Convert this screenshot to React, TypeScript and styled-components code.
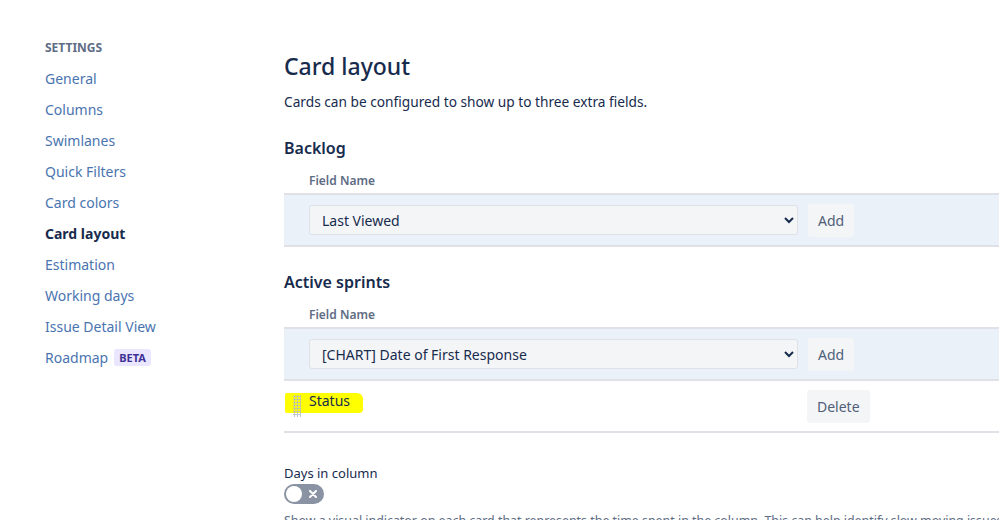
import React from "react";
import styled, { createGlobalStyle } from "styled-components";

const GlobalStyle = createGlobalStyle`
  body {
    margin: 0;
    background: #fff;
    font-family: "Noto Sans", "Liberation Sans", sans-serif;
    color: #172b4d;
  }
`;

const navItems = [
  "General",
  "Columns",
  "Swimlanes",
  "Quick Filters",
  "Card colors",
  "Card layout",
  "Estimation",
  "Working days",
  "Issue Detail View",
];

const App: React.FC = () => {
  return (
    <>
      <GlobalStyle />
      <Page>
        <Sidebar>
          <SideHeading>SETTINGS</SideHeading>
          {navItems.map((item) => (
            <NavLink key={item} $active={item === "Card layout"}>
              {item}
            </NavLink>
          ))}
          <NavLink>
            Roadmap <Lozenge>BETA</Lozenge>
          </NavLink>
        </Sidebar>

        <Main>
          <Title>Card layout</Title>
          <Intro>Cards can be configured to show up to three extra fields.</Intro>

          <SectionTitle>Backlog</SectionTitle>
          <FieldHead>Field Name</FieldHead>
          <AddRow>
            <Select defaultValue="Last Viewed">
              <option>Last Viewed</option>
            </Select>
            <Button>Add</Button>
          </AddRow>

          <SectionTitle $top={25}>Active sprints</SectionTitle>
          <FieldHead>Field Name</FieldHead>
          <AddRow>
            <Select defaultValue="[CHART] Date of First Response">
              <option>[CHART] Date of First Response</option>
            </Select>
            <Button>Add</Button>
          </AddRow>
          <FieldRow>
            <Marker />
            <Handle />
            <FieldName>Status</FieldName>
            <Button>Delete</Button>
          </FieldRow>

          <ToggleLabel>Days in column</ToggleLabel>
          <Toggle>
            <Knob />
            <Cross>
              <svg width="8" height="8" viewBox="0 0 8 8">
                <path d="M1 1L7 7M7 1L1 7" stroke="#fff" strokeWidth="2" strokeLinecap="round" />
              </svg>
            </Cross>
          </Toggle>
          <Help>
            Show a visual indicator on each card that represents the time spent in the column. This can help identify slow moving issues.
          </Help>
        </Main>
      </Page>
    </>
  );
};

const Page = styled.div`
  display: flex;
  width: 999px;
  height: 520px;
  overflow: hidden;
`;

const Sidebar = styled.nav`
  width: 284px;
  flex-shrink: 0;
  padding: 40px 0 0 45px;
  box-sizing: border-box;
  display: flex;
  flex-direction: column;
`;

const SideHeading = styled.div`
  font-size: 12px;
  font-weight: 700;
  line-height: 16px;
  color: #5e6c84;
  margin-bottom: 7px;
`;

const NavLink = styled.a<{ $active?: boolean }>`
  display: flex;
  align-items: center;
  height: 31px;
  font-size: 14px;
  color: ${(p) => (p.$active ? "#172b4d" : "#4a74b0")};
  font-weight: ${(p) => (p.$active ? 700 : 400)};
  cursor: pointer;
`;

const Lozenge = styled.span`
  margin-left: 6px;
  background: #eae6ff;
  color: #403294;
  font-size: 11px;
  font-weight: 700;
  padding: 1px 5px;
  border-radius: 3px;
  line-height: 15px;
`;

const Main = styled.main`
  flex: 1;
  min-width: 0;
  padding-top: 50px;
`;

const Title = styled.h1`
  margin: 0;
  font-size: 23px;
  font-weight: 500;
  line-height: 32px;
  color: #172b4d;
`;

const Intro = styled.p`
  margin: 10px 0 0;
  font-size: 13.7px;
  line-height: 20px;
  color: #172b4d;
`;

const SectionTitle = styled.h3<{ $top?: number }>`
  margin: ${(p) => p.$top ?? 26}px 0 0;
  font-size: 16px;
  font-weight: 600;
  line-height: 20px;
  color: #172b4d;
`;

const FieldHead = styled.div`
  margin-top: 15px;
  padding-left: 25px;
  font-size: 12px;
  font-weight: 600;
  line-height: 16px;
  color: #5e6c84;
  padding-bottom: 4px;
`;

const AddRow = styled.div`
  display: flex;
  align-items: center;
  gap: 10px;
  height: 50px;
  padding-left: 25px;
  background: #ebf1f9;
  border-top: 2px solid #dfe1e6;
  border-bottom: 2px solid #dfe1e6;
`;

const Select = styled.select`
  width: 489px;
  height: 30px;
  padding: 0 8px;
  font-family: inherit;
  font-size: 14px;
  color: #172b4d;
  background: #f4f5f7;
  border: 1px solid #dfe1e6;
  border-radius: 3px;
`;

const Button = styled.button`
  height: 33px;
  padding: 0 10px;
  font-family: inherit;
  font-size: 14px;
  color: #505f79;
  background: #f4f5f7;
  border: 0;
  border-radius: 3px;
`;

const FieldRow = styled.div`
  display: flex;
  align-items: center;
  height: 50px;
  padding-left: 9px;
  border-bottom: 2px solid #dfe1e6;
  position: relative;
  ${Button} {
    margin-left: 458px;
  }
`;

const Marker = styled.span`
  position: absolute;
  left: 1px;
  top: 12px;
  width: 78px;
  height: 20px;
  background: #ffff00;
  border-radius: 2px 6px 4px 2px;
`;

const Handle = styled.span`
  position: relative;
  width: 8px;
  height: 22px;
  margin-right: 8px;
  background-image: radial-gradient(#b3bac5 1px, transparent 1.2px);
  background-size: 3px 3px;
  opacity: 0.8;
`;

const FieldName = styled.span`
  position: relative;
  width: 40px;
  align-self: flex-start;
  margin-top: 10px;
  font-size: 14px;
  line-height: 20px;
  color: #172b4d;
`;

const ToggleLabel = styled.div`
  margin-top: 32px;
  font-size: 13px;
  line-height: 16px;
  color: #172b4d;
`;

const Toggle = styled.div`
  margin-top: 3px;
  width: 40px;
  height: 20px;
  border-radius: 10px;
  background: #8993a4;
  display: flex;
  align-items: center;
  justify-content: space-between;
  padding: 0 7px 0 2px;
  box-sizing: border-box;
`;

const Knob = styled.span`
  width: 16px;
  height: 16px;
  border-radius: 50%;
  background: #fff;
`;

const Cross = styled.span`
  display: flex;
`;

const Help = styled.p`
  margin: 8px 0 0;
  font-size: 12.4px;
  color: #5e6c84;
  white-space: nowrap;
`;

export default App;
